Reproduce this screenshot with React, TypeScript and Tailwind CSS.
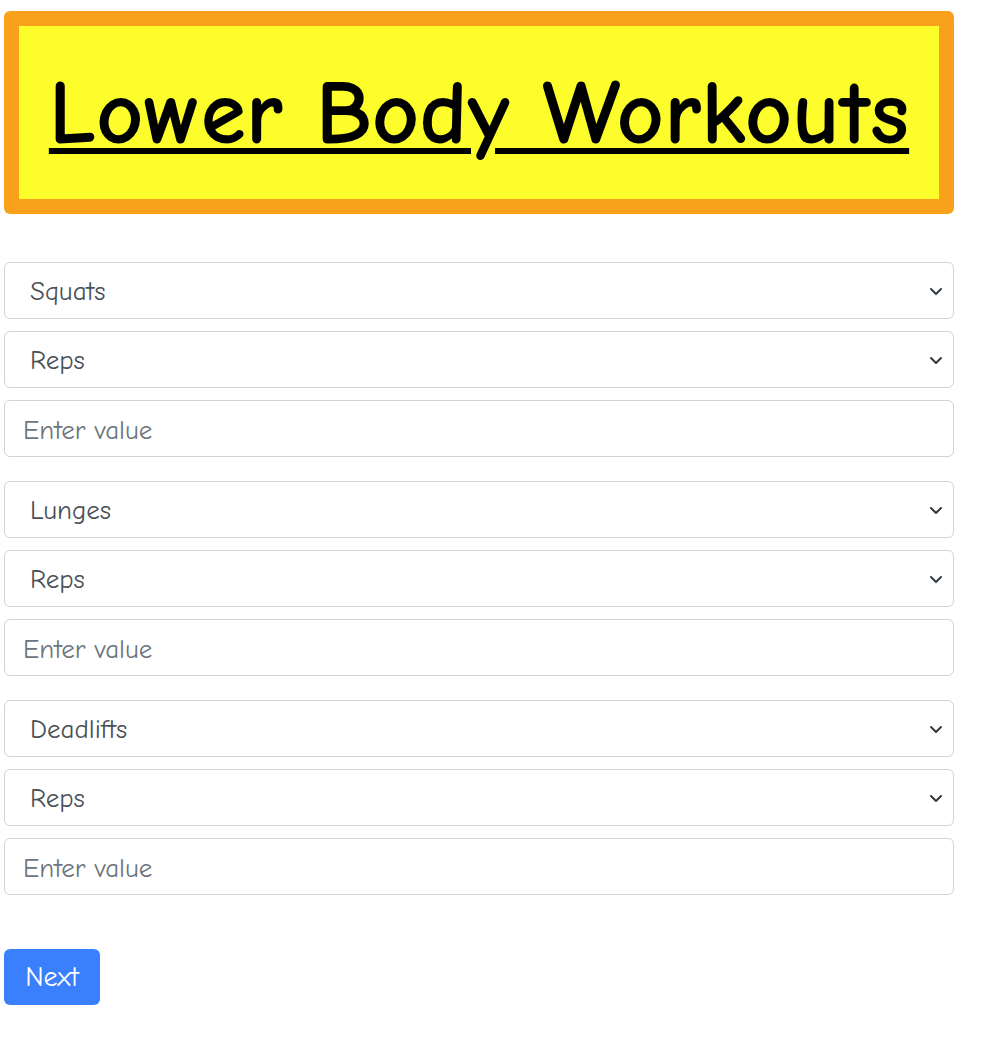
const font = '"Comic Sans MS", "Comic Neue", "Noto Sans", sans-serif';

function Chevron() {
  return (
    <svg
      className="pointer-events-none absolute right-[10px] top-1/2 -translate-y-1/2"
      width="16"
      height="16"
      viewBox="0 0 16 16"
      fill="none"
      stroke="#343a40"
      strokeWidth="2"
      strokeLinecap="round"
      strokeLinejoin="round"
    >
      <path d="M3 6l5 5 5-5" />
    </svg>
  );
}

function Select({ value, options }: { value: string; options: string[] }) {
  return (
    <div className="relative">
      <select
        defaultValue={value}
        className="block h-[57px] w-full appearance-none rounded-[6px] border border-[#ced4da] bg-white pt-[4px] pl-[25px] pr-10 text-[27px] text-[#495057] outline-none"
        style={{ fontFamily: font }}
      >
        {options.map((o) => (
          <option key={o}>{o}</option>
        ))}
      </select>
      <Chevron />
    </div>
  );
}

const exercises = ["Squats", "Lunges", "Deadlifts"];

export default function App() {
  return (
    <div className="min-h-screen bg-white pt-[11px] pl-[4px]" style={{ fontFamily: font }}>
      <div className="w-[950px]">
        <div className="rounded-[6px] bg-[#f9a11b] p-[15px]">
          <div className="flex h-[173px] items-center justify-center bg-[#fdfd2c]">
            <h1 className="text-[92px] font-bold leading-none text-black underline decoration-[6px] underline-offset-[5px]">
              Lower Body Workouts
            </h1>
          </div>
        </div>

        <div className="mt-[48px] flex flex-col gap-[24px]">
          {exercises.map((ex) => (
            <div key={ex} className="flex flex-col gap-[12px]">
              <Select value={ex} options={exercises} />
              <Select value="Reps" options={["Reps", "Seconds", "Minutes"]} />
              <input
                type="text"
                placeholder="Enter value"
                className="block h-[57px] w-full rounded-[6px] border border-[#ced4da] bg-white pt-[3px] px-[18px] text-[27px] text-[#495057] outline-none placeholder:text-[#6c757d]"
                style={{ fontFamily: font }}
              />
            </div>
          ))}
        </div>

        <button
          className="mt-[54px] h-[56px] w-[96px] rounded-[6px] bg-[#3a7ffc] text-[28px] text-white"
          style={{ fontFamily: font }}
        >
          Next
        </button>
      </div>
    </div>
  );
}
